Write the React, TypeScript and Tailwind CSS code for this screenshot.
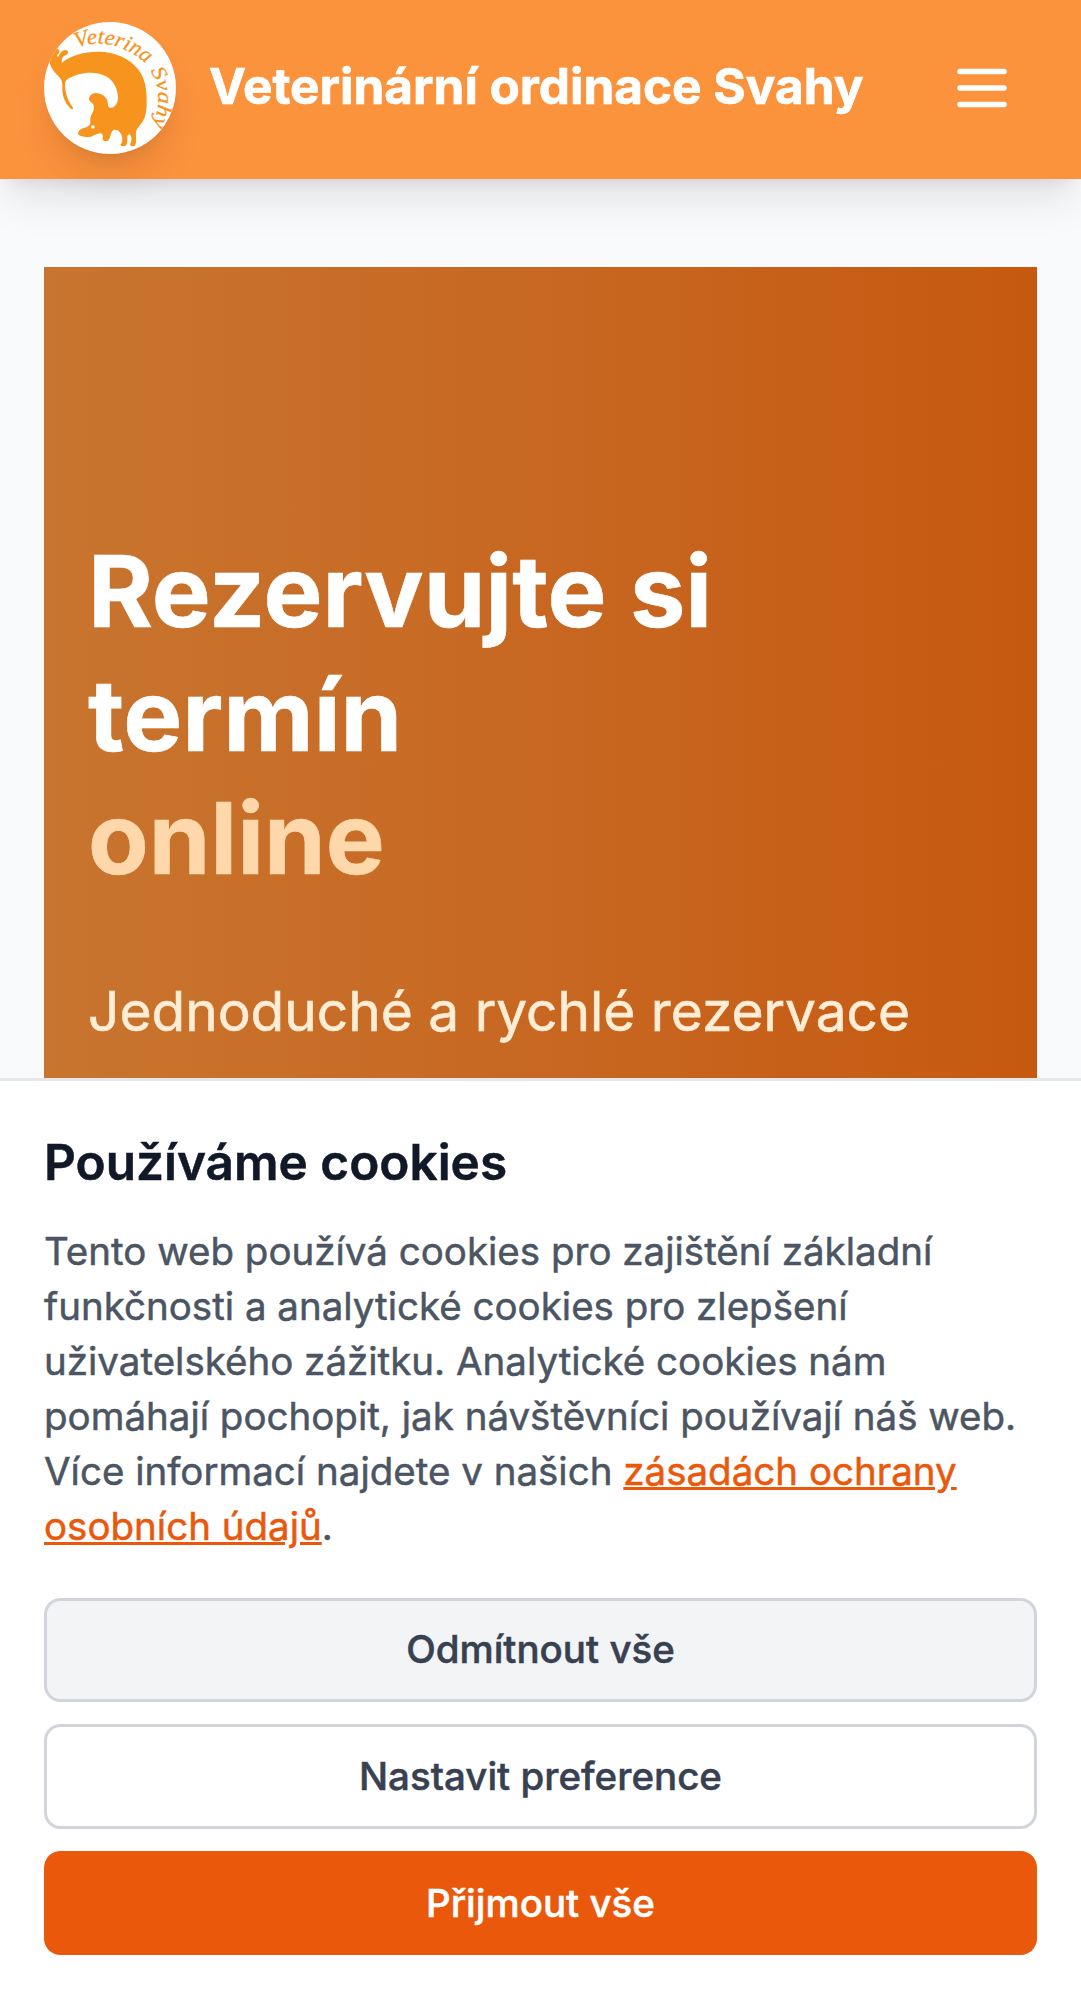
function Logo() {
  return (
    <svg viewBox="42 36 396 396" className="size-full" role="img" aria-label="Veterina Svahy">
      <defs>
        <path id="logo-top" d="M140 114 C190 92 270 92 350 162" />
        <path id="logo-side" d="M360 182 C390 224 394 284 366 354" />
      </defs>
      <path
        fill="#f7941d"
        d="M58 152 C60 136 68 118 82 117 C91 119 90 128 83 133 C79 139 82 143 86 138 C91 128 98 119 108 120 C117 123 116 132 107 136 C98 139 93 148 96 158 C125 135 160 125 205 125 C255 125 300 145 326 180 C348 210 351 245 350 285 C349 315 342 333 328 348 C319 358 317 366 318 380 C319 395 319 408 308 409 C299 409 299 402 303 397 C306 388 305 376 298 373 C291 374 292 383 292 392 C292 404 286 410 277 409 C270 407 271 402 275 399 C279 390 277 375 269 366 C262 358 251 357 246 364 C241 373 242 386 233 392 C224 396 216 391 218 383 C220 374 216 369 209 370 C200 371 195 376 183 380 C170 383 151 381 145 373 C142 366 149 358 161 354 C171 351 180 347 181 338 C180 328 181 318 187 309 C193 299 193 288 189 282 C184 276 177 275 177 265 C179 256 187 249 198 249 C214 250 228 259 232 272 C235 281 231 288 239 293 C252 296 264 282 264 262 C263 235 250 213 232 201 C208 186 174 185 146 193 C125 200 109 207 106 216 C103 235 108 263 128 292 C131 299 126 300 121 295 C104 279 95 253 97 232 C98 215 94 207 87 200 C73 187 61 172 58 152 Z"
      />
      <circle cx="188.500" cy="351" r="5.500" fill="#fff" />
      <g fill="#f7941d" stroke="#f7941d" strokeWidth="0.8" fontFamily="'Liberation Serif', serif" fontStyle="italic">
        <text fontSize="66">
          <textPath href="#logo-top" textLength="226" lengthAdjust="spacingAndGlyphs">Veterina</textPath>
        </text>
        <text fontSize="62">
          <textPath href="#logo-side" textLength="174" lengthAdjust="spacingAndGlyphs">Svahy</textPath>
        </text>
      </g>
    </svg>
  );
}

function Header() {
  return (
    <header className="relative z-10 flex h-[178.75px] items-start justify-between bg-[#fb923c] px-11 pt-[22px] shadow-[0_27.5px_41.25px_-8.25px_rgba(0,0,0,0.1),0_11px_16.5px_-11px_rgba(0,0,0,0.1)]">
      <div className="flex items-center gap-[33px]">
        <div className="size-[132px] overflow-hidden rounded-full bg-white shadow-[0_27.5px_41.25px_-8.25px_rgba(0,0,0,0.1),0_11px_16.5px_-11px_rgba(0,0,0,0.1)]">
          <Logo />
        </div>
        <span className="pb-[3px] text-[49.5px] leading-[77px] font-bold whitespace-nowrap text-white [-webkit-text-stroke:0.7px]">
          Veterinární ordinace Svahy
        </span>
      </div>
      <button aria-label="Menu" className="mt-[11px] p-[22px] text-white">
        <svg className="size-[66px]" fill="none" viewBox="0 0 24 24" stroke="currentColor" strokeWidth={2} strokeLinecap="round" strokeLinejoin="round">
          <path d="M4 6h16M4 12h16M4 18h16" />
        </svg>
      </button>
    </header>
  );
}

function Hero() {
  return (
    <main className="min-h-0 flex-1 overflow-hidden px-11 pt-[88px]">
      <section className="h-[1650px] bg-linear-to-r from-[#c8752f] to-[#c6590f] px-11 pt-[263px]">
        <h1 className="mb-[65.5px] text-[99px] leading-[123.75px] font-bold text-white [-webkit-text-stroke:0.6px]">
          Rezervujte si termín
          <span className="block text-[#fed7aa]">online</span>
        </h1>
        <p className="text-[55px] leading-[89.4px] text-[#ffedd5] [-webkit-text-stroke:0.6px]">
          Jednoduché a rychlé rezervace
        </p>
      </section>
    </main>
  );
}

function CookieBanner() {
  const button =
    "h-[104.5px] w-full rounded-[16.5px] text-[38.5px] leading-[55px] font-medium [-webkit-text-stroke:0.5px]";
  return (
    <aside className="z-20 border-t-[3px] border-[#e5e7eb] bg-white px-11 pt-[42.75px] pb-11">
      <h2 className="mb-[23px] text-[49.5px] leading-[77px] font-semibold text-[#111827] [-webkit-text-stroke:0.5px]">
        Používáme cookies
      </h2>
      <p className="mb-11 text-[38.5px] leading-[55px] text-[#4b5563] [-webkit-text-stroke:0.5px]">
        Tento web používá cookies pro zajištění základní funkčnosti a analytické cookies pro zlepšení
        uživatelského zážitku. Analytické cookies nám pomáhají pochopit, jak návštěvníci používají náš web.
        Více informací najdete v našich{" "}
        <a href="#" className="text-[#ea580c] underline">zásadách ochrany osobních údajů</a>.
      </p>
      <div className="flex flex-col gap-[22px]">
        <button className={`${button} border-[3px] border-[#d1d5db] bg-[#f3f4f6] text-[#374151]`}>Odmítnout vše</button>
        <button className={`${button} border-[3px] border-[#d1d5db] bg-white text-[#374151]`}>Nastavit preference</button>
        <button className={`${button} bg-[#ea580c] pt-px text-white`}>Přijmout vše</button>
      </div>
    </aside>
  );
}

export default function App() {
  return (
    <div className="flex h-[1999px] flex-col overflow-hidden bg-[#f9fafb] font-['Inter',sans-serif] antialiased">
      <Header />
      <Hero />
      <CookieBanner />
    </div>
  );
}
